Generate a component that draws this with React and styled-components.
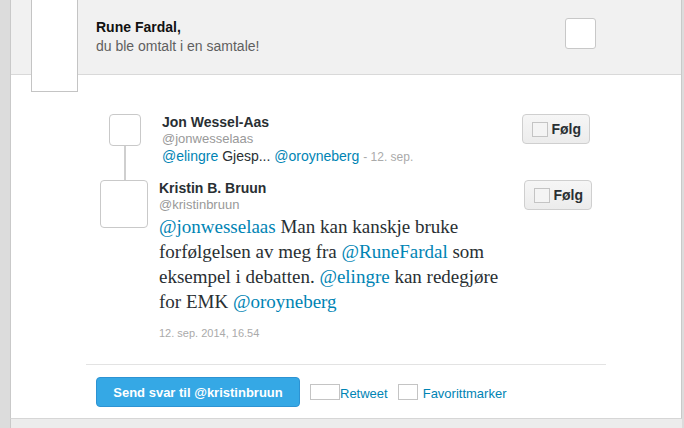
import React from 'react';
import styled, { createGlobalStyle } from 'styled-components';

const GlobalStyle = createGlobalStyle`
	html, body {
		margin: 0;
		padding: 0;
		background: #dcdcdc;
		font-family: 'Liberation Sans', Arial, sans-serif;
	}
`;

const Page = styled.div`
	display: flex;
	flex-direction: column;
	width: 684px;
	height: 428px;
	overflow: hidden;
	background: #dcdcdc;
`;

const Panel = styled.div`
	margin: 0 2px 0 10px;
	border-left: 1px solid #c9c9c9;
	border-right: 1px solid #c9c9c9;
	border-bottom: 1px solid #d6d6d6;
	background: #fff;
`;

const Header = styled.div`
	position: relative;
	display: flex;
	align-items: flex-start;
	justify-content: space-between;
	height: 75px;
	padding: 18px 85px 0 85px;
	box-sizing: border-box;
	background: #f1f1f1;
	border-bottom: 1px solid #d9d9d9;
`;

const BigAvatar = styled.div`
	position: absolute;
	left: 20px;
	top: -10px;
	width: 45px;
	height: 100px;
	background: #fff;
	border: 1px solid #c4c4c4;
`;

const HeaderText = styled.div`
	font-size: 14px;
	line-height: 19px;
	color: #5f5f5f;
	b {
		color: #111;
	}
`;

const SmallBox = styled.div`
	width: 29px;
	height: 29px;
	background: #fff;
	border: 1px solid #c8c8c8;
	border-radius: 3px;
`;

const Conversation = styled.div`
	padding: 39px 89px 0 0;
`;

const TweetRow = styled.div`
	display: flex;
	align-items: flex-start;
	padding-left: ${(p) => p.indent}px;
	padding-right: ${(p) => p.right}px;
`;

const AvatarCol = styled.div`
	display: flex;
	flex-direction: column;
	align-items: center;
	width: ${(p) => p.size}px;
	margin-right: ${(p) => p.gap}px;
	flex-shrink: 0;
`;

const Avatar = styled.div`
	width: ${(p) => p.size - 2}px;
	height: ${(p) => p.size - 2}px;
	border: 1px solid #c9c9c9;
	border-radius: 4px;
	background: #fff;
`;

const Connector = styled.div`
	width: 2px;
	height: 34px;
	background: #cfcfcf;
`;

const Body = styled.div`
	flex: 1;
	min-width: 0;
`;

const Name = styled.div`
	font-size: 14px;
	line-height: 17px;
	font-weight: bold;
	color: #292f33;
`;

const Handle = styled.div`
	font-size: 13px;
	line-height: 15px;
	color: #999;
`;

const ShortText = styled.div`
	margin-top: 2px;
	font-size: 14px;
	line-height: 16px;
	color: #292f33;
`;

const Mention = styled.span`
	color: #0084b4;
`;

const Meta = styled.span`
	font-size: 12px;
	color: #aaa;
`;

const BigText = styled.div`
	margin-top: 2px;
	font-family: 'Liberation Serif', 'Times New Roman', serif;
	font-size: 19px;
	line-height: 25px;
	color: #292f33;
	white-space: nowrap;
`;

const Timestamp = styled.div`
	margin-top: 11px;
	font-size: 11px;
	line-height: 16px;
	color: #aaa;
`;

const FollowButton = styled.button`
	display: flex;
	align-items: center;
	gap: 3px;
	box-sizing: border-box;
	height: 30px;
	padding: 0 8px 0 9px;
	border: 1px solid #cfcfcf;
	border-radius: 4px;
	background: linear-gradient(#f6f6f6, #ececec);
	font-family: 'Liberation Sans', Arial, sans-serif;
	font-size: 14px;
	font-weight: bold;
	color: #292f33;
	flex-shrink: 0;
`;

const IconBox = styled.span`
	display: inline-block;
	flex-shrink: 0;
	width: ${(p) => p.w}px;
	height: ${(p) => p.h}px;
	box-sizing: border-box;
	border: 1px solid #c4c4c4;
	background: ${(p) => p.bg || 'transparent'};
`;

const Divider = styled.div`
	margin: 23px 0 0 75px;
	width: 520px;
	height: 1px;
	background: #e3e3e3;
`;

const Footer = styled.div`
	display: flex;
	align-items: center;
	padding: 12px 0 11px 85px;
`;

const ReplyButton = styled.button`
	box-sizing: border-box;
	height: 30px;
	width: 204px;
	padding: 0;
	border: 1px solid #2d93d3;
	border-radius: 4px;
	background: #35a8e5;
	color: #fff;
	font-family: 'Liberation Sans', Arial, sans-serif;
	font-size: 13px;
	font-weight: bold;
	margin-right: 10px;
`;

const Action = styled.span`
	display: flex;
	align-items: flex-start;
	height: 16px;
	margin-right: ${(p) => p.mr}px;
	font-size: 13px;
	line-height: 18px;
	color: #0084b4;
`;

const ActionLabel = styled.span`
	margin-left: ${(p) => p.ml}px;
	margin-top: 1px;
`;

const BottomBar = styled.div`
	flex: 1;
	background: #ececec;
	margin: 0 2px 0 10px;
	border-left: 1px solid #c9c9c9;
`;

function Follow() {
	return (
		<FollowButton>
			<IconBox w={16} h={15} bg='#f4f4f4' />
			Følg
		</FollowButton>
	);
}

export default function App() {
	return (
		<Page>
			<GlobalStyle />
			<Panel>
				<Header>
					<BigAvatar />
					<HeaderText>
						<b>Rune Fardal,</b>
						<br />
						du ble omtalt i en samtale!
					</HeaderText>
					<SmallBox />
				</Header>
				<Conversation>
					<TweetRow indent={98} right={2}>
						<AvatarCol size={32} gap={21}>
							<Avatar size={32} />
							<Connector />
						</AvatarCol>
						<Body>
							<Name>Jon Wessel-Aas</Name>
							<Handle>@jonwesselaas</Handle>
							<ShortText>
								<Mention>@elingre</Mention> Gjesp... <Mention>@oroyneberg</Mention>{' '}
								<Meta>- 12. sep.</Meta>
							</ShortText>
						</Body>
						<Follow />
					</TweetRow>
					<TweetRow indent={89} right={0}>
						<AvatarCol size={48} gap={11}>
							<Avatar size={48} />
						</AvatarCol>
						<Body>
							<Name>Kristin B. Bruun</Name>
							<Handle>@kristinbruun</Handle>
							<BigText>
								<Mention>@jonwesselaas</Mention> Man kan kanskje bruke
								<br />
								forfølgelsen av meg fra <Mention>@RuneFardal</Mention> som
								<br />
								eksempel i debatten. <Mention>@elingre</Mention> kan redegjøre
								<br />
								for EMK <Mention>@oroyneberg</Mention>
							</BigText>
							<Timestamp>12. sep. 2014, 16.54</Timestamp>
						</Body>
						<Follow />
					</TweetRow>
				</Conversation>
				<Divider />
				<Footer>
					<ReplyButton>Send svar til @kristinbruun</ReplyButton>
					<Action mr={10}>
						<IconBox w={30} h={16} />
						<ActionLabel ml={0}>Retweet</ActionLabel>
					</Action>
					<Action mr={0}>
						<IconBox w={20} h={16} />
						<ActionLabel ml={5}>Favorittmarker</ActionLabel>
					</Action>
				</Footer>
			</Panel>
			<BottomBar />
		</Page>
	);
}
